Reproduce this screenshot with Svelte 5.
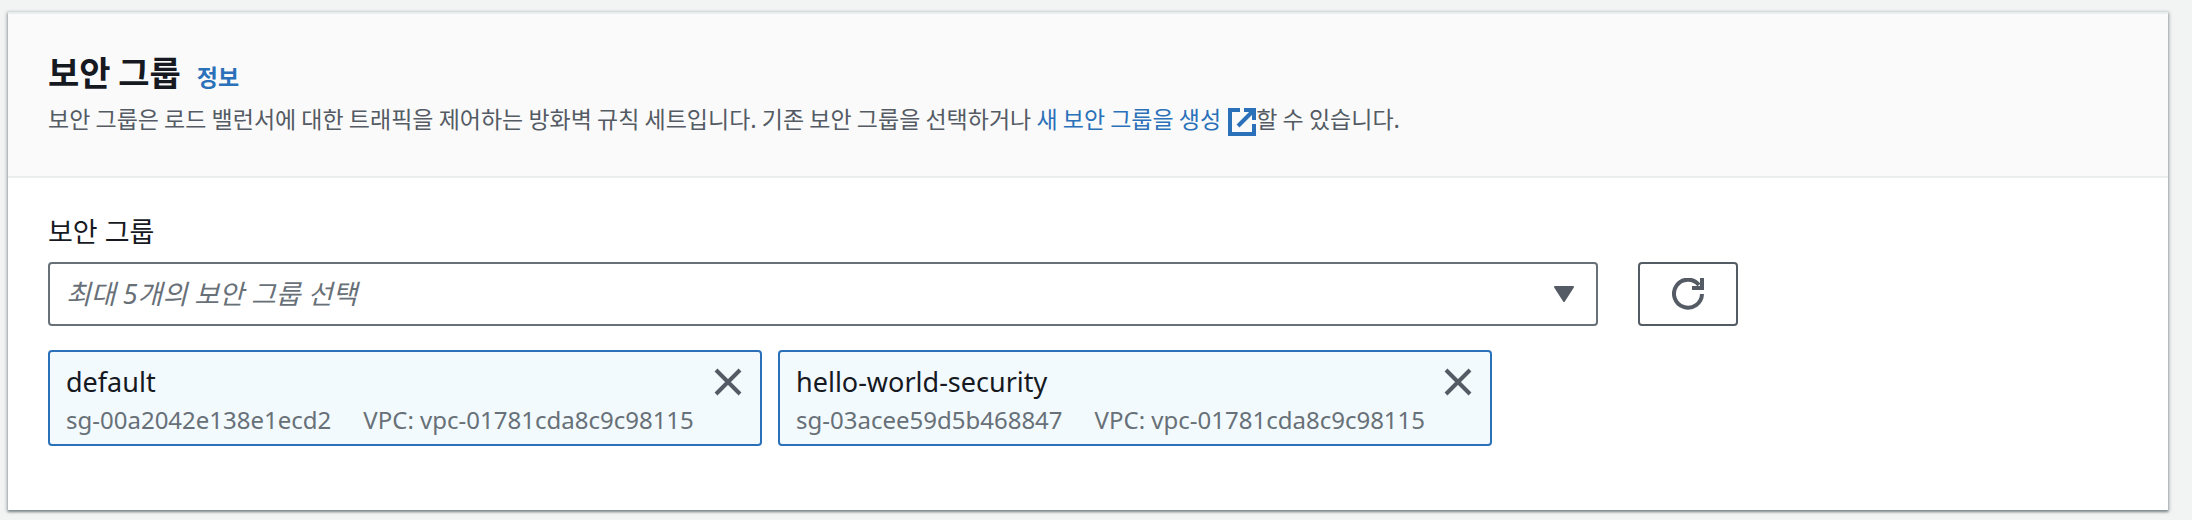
<script lang="ts">
  type SecurityGroup = {
    id: string;
    name: string;
    vpcId: string;
  };

  const available: SecurityGroup[] = [
    { id: 'sg-00a2042e138e1ecd2', name: 'default', vpcId: 'vpc-01781cda8c9c98115' },
    { id: 'sg-03acee59d5b468847', name: 'hello-world-security', vpcId: 'vpc-01781cda8c9c98115' },
  ];

  let selectedIds = $state<string[]>(available.map((group) => group.id));
  let choice = $state('');

  const selected = $derived(available.filter((group) => selectedIds.includes(group.id)));
  const remaining = $derived(available.filter((group) => !selectedIds.includes(group.id)));

  function add() {
    if (choice) selectedIds.push(choice);
    choice = '';
  }

  function remove(id: string) {
    selectedIds = selectedIds.filter((item) => item !== id);
  }

  function reset() {
    selectedIds = available.map((group) => group.id);
  }
</script>

<main>
  <section class="card">
    <header>
      <div class="title">
        <h2>보안 그룹</h2>
        <a class="info" href="#info">정보</a>
      </div>
      <p>
        보안 그룹은 로드 밸런서에 대한 트래픽을 제어하는 방화벽 규칙 세트입니다. 기존 보안 그룹을 선택하거나
        <a href="#create">새 보안 그룹을 생성
          <svg class="external" viewBox="0 0 28 28" aria-hidden="true">
            <path d="M12 2H2v24h24V16M16 2h10v10M26 2L10 18" />
          </svg></a>할 수 있습니다.
      </p>
    </header>

    <div class="body">
      <label for="security-groups">보안 그룹</label>
      <div class="picker">
        <div class="select">
          <select id="security-groups" bind:value={choice} onchange={add}>
            <option value="" disabled>최대 5개의 보안 그룹 선택</option>
            {#each remaining as group (group.id)}
              <option value={group.id}>{group.name}</option>
            {/each}
          </select>
          <svg class="caret" viewBox="0 0 20 16" aria-hidden="true">
            <path d="M1 1h18L10 15z" />
          </svg>
        </div>
        <button class="refresh" type="button" aria-label="새로 고침" onclick={reset}>
          <svg viewBox="0 0 32 32" aria-hidden="true">
            <path d="M30 16A14 14 0 1 1 27 7" />
            <path d="M30 0v10H20" />
          </svg>
        </button>
      </div>

      <ul class="tokens">
        {#each selected as group (group.id)}
          <li>
            <div>
              <span class="name">{group.name}</span>
              <div class="meta">
                <span>{group.id}</span>
                <span>VPC: {group.vpcId}</span>
              </div>
            </div>
            <button class="dismiss" type="button" aria-label="{group.name} 제거" onclick={() => remove(group.id)}>
              <svg viewBox="0 0 28 28" aria-hidden="true">
                <path d="M2 2l24 24M26 2L2 26" />
              </svg>
            </button>
          </li>
        {/each}
      </ul>
    </div>
  </section>
</main>

<style>
  :global(body) {
    background: #f2f3f3;
  }

  main {
    padding: 12px 24px 10px 8px;
    color: #16191f;
    font-family: 'Noto Sans', 'Noto Sans CJK KR', sans-serif;
    font-size: 27px;
    line-height: 32px;
  }

  .card {
    background: #fff;
    border-top: 2px solid #eaeded;
    box-shadow:
      0 2px 2px rgba(0, 28, 36, 0.3),
      1px 1px 3px 1px rgba(0, 28, 36, 0.15),
      -1px 1px 3px 1px rgba(0, 28, 36, 0.15);
  }

  header {
    padding: 36px 40px 38px;
    background: #fafafa;
    border-bottom: 2px solid #eaeded;
  }

  .title {
    display: flex;
    align-items: baseline;
    gap: 16px;
    margin-bottom: 4px;
  }

  h2 {
    margin: 0;
    font-family: 'Noto Sans CJK KR', sans-serif;
    font-size: 34px;
    font-weight: 700;
    line-height: 44px;
  }

  a {
    color: #2a71b9;
    text-decoration: none;
  }

  .info {
    font-size: 23px;
    font-weight: 700;
  }

  p {
    margin: 0;
    color: #545b64;
    font-family: 'Noto Sans CJK KR', sans-serif;
    font-size: 23px;
    line-height: 40px;
  }

  svg {
    display: block;
    fill: none;
    stroke: currentColor;
    stroke-width: 4;
  }

  .external {
    display: inline-block;
    width: 28px;
    height: 28px;
    margin-left: 2px;
    vertical-align: middle;
  }

  .body {
    padding: 38px 40px 64px;
  }

  label {
    display: block;
    margin-bottom: 14px;
  }

  .picker {
    display: flex;
    gap: 40px;
  }

  .select {
    position: relative;
    flex: 0 1 1550px;
  }

  select {
    display: block;
    box-sizing: border-box;
    width: 100%;
    height: 64px;
    padding: 0 64px 0 16px;
    appearance: none;
    background: #fff;
    border: 2px solid #687078;
    border-radius: 4px;
    color: #687078;
    font: inherit;
    font-style: italic;
  }

  .caret {
    position: absolute;
    top: 24px;
    right: 24px;
    width: 20px;
    height: 16px;
    color: #545b64;
    fill: currentColor;
    stroke-width: 2;
    stroke-linejoin: round;
    pointer-events: none;
  }

  button {
    padding: 0;
    background: none;
    border: 0;
    color: #545b64;
    cursor: pointer;
  }

  .refresh {
    display: flex;
    flex: none;
    align-items: center;
    justify-content: center;
    width: 100px;
    border: 2px solid #545b64;
    border-radius: 4px;
  }

  .refresh svg {
    width: 32px;
    height: 32px;
  }

  .tokens {
    display: flex;
    flex-wrap: wrap;
    gap: 16px;
    margin: 24px 0 0;
    padding: 0;
    list-style: none;
  }

  li {
    display: flex;
    box-sizing: border-box;
    flex: 0 1 714px;
    align-items: flex-start;
    justify-content: space-between;
    padding: 10px 18px 6px 16px;
    background: #f2fafd;
    border: 2px solid #2a71b9;
    border-radius: 4px;
  }

  .name {
    display: block;
    line-height: 40px;
  }

  .meta {
    display: flex;
    gap: 32px;
    color: #687078;
    font-size: 24px;
    line-height: 36px;
  }

  .dismiss {
    margin-top: 6px;
  }

  .dismiss svg {
    width: 28px;
    height: 28px;
  }
</style>
